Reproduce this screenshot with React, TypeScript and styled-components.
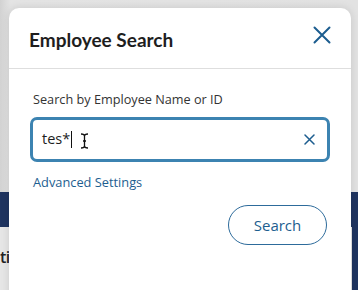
import styled, { createGlobalStyle } from "styled-components";

const GlobalStyle = createGlobalStyle`
  html, body {
    margin: 0;
    padding: 0;
  }
  body {
    font-family: "Open Sans", "Noto Sans", sans-serif;
    background: #dcdcdc;
  }
`;

const App = () => {
  return (
    <Page>
      <GlobalStyle />
      <Backdrop>
        <TopArea />
        <NavBar />
        <Lower>
          <LowerMain>
            <PageText>ti</PageText>
          </LowerMain>
          <SidePanel />
        </Lower>
      </Backdrop>

      <Modal>
        <ModalHeader>
          <Title>Employee Search</Title>
          <CloseButton aria-label="Close">
            <svg width="18" height="18" viewBox="0 0 18 18">
              <path
                d="M1.5 1.5 L16.5 16.5 M16.5 1.5 L1.5 16.5"
                stroke="currentColor"
                strokeWidth="2"
                strokeLinecap="round"
              />
            </svg>
          </CloseButton>
        </ModalHeader>
        <ModalBody>
          <Label>Search by Employee Name or ID</Label>
          <Field>
            <FieldText>tes*</FieldText>
            <Caret />
            <Pointer>
              <svg width="9" height="16" viewBox="0 0 9 16">
                <path
                  d="M1 1 Q4.5 1 4.5 3 L4.5 13 Q4.5 15 1 15 M8 1 Q4.5 1 4.5 3 M4.5 13 Q4.5 15 8 15 M3 8 L6 8"
                  stroke="#111"
                  strokeWidth="1.3"
                  fill="none"
                />
              </svg>
            </Pointer>
            <ClearButton aria-label="Clear">
              <svg width="11" height="11" viewBox="0 0 11 11">
                <path
                  d="M1 1 L10 10 M10 1 L1 10"
                  stroke="currentColor"
                  strokeWidth="1.5"
                  strokeLinecap="round"
                />
              </svg>
            </ClearButton>
          </Field>
          <AdvancedLink href="#">Advanced Settings</AdvancedLink>
          <Actions>
            <SearchButton type="button">Search</SearchButton>
          </Actions>
        </ModalBody>
      </Modal>
    </Page>
  );
};

const Page = styled.div`
  position: relative;
  width: 358px;
  height: 290px;
  overflow: hidden;
`;

const Backdrop = styled.div`
  display: flex;
  flex-direction: column;
  height: 100%;
  background: linear-gradient(90deg, #d2d2d2 0%, #e4e4e4 3%, #e2e2e2 100%);
`;

const TopArea = styled.div`
  height: 192px;
`;

const NavBar = styled.div`
  height: 35px;
  background: #1f3460;
`;

const Lower = styled.div`
  flex: 1;
  display: flex;
`;

const LowerMain = styled.div`
  flex: 1;
  padding-top: 19px;
  background: #e6e6e6;
`;

const PageText = styled.div`
  font-size: 16px;
  font-weight: 600;
  color: #222;
  letter-spacing: -0.5px;
`;

const SidePanel = styled.div`
  width: 6px;
  background: #1f3460;
`;

const Modal = styled.div`
  position: absolute;
  top: 8px;
  left: 9px;
  width: 342px;
  height: 310px;
  background: #fff;
  border-radius: 10px;
  box-shadow: 0 0 8px rgba(0, 0, 0, 0.12);
`;

const ModalHeader = styled.div`
  display: flex;
  align-items: center;
  justify-content: space-between;
  height: 60px;
  padding: 0 20px 0 20px;
  border-bottom: 1px solid #dedede;
`;

const Title = styled.h2`
  margin: 0;
  font-family: "Lato", "Open Sans", sans-serif;
  font-size: 19px;
  font-weight: 700;
  color: #1e1e1e;
  padding-top: 2px;
`;

const CloseButton = styled.button`
  display: flex;
  padding: 0;
  border: none;
  background: none;
  color: #1c5d8f;
  margin-top: -6px;
`;

const ModalBody = styled.div`
  display: flex;
  flex-direction: column;
  padding: 21px 21px 0 21px;
`;

const Label = styled.label`
  margin-left: 3px;
  font-size: 12.7px;
  line-height: 18px;
  color: #333;
`;

const Field = styled.div`
  position: relative;
  display: flex;
  align-items: center;
  box-sizing: border-box;
  height: 45px;
  margin-top: 9px;
  padding: 0 9px;
  border: 3px solid #3c83b1;
  border-radius: 7px;
`;

const FieldText = styled.span`
  font-size: 14.5px;
  color: #1e1e1e;
  padding-bottom: 2px;
`;

const Caret = styled.span`
  width: 1px;
  height: 17px;
  margin-left: 1px;
  background: #111;
`;

const Pointer = styled.span`
  display: flex;
  margin-left: 8px;
  margin-top: 2px;
`;

const ClearButton = styled.button`
  display: flex;
  margin-left: auto;
  margin-right: 3px;
  padding: 0;
  border: none;
  background: none;
  color: #1c5d8f;
`;

const AdvancedLink = styled.a`
  align-self: flex-start;
  margin-top: 11px;
  margin-left: 3px;
  font-size: 12.8px;
  font-weight: 500;
  line-height: 18px;
  color: #1d5e90;
  text-decoration: none;
`;

const Actions = styled.div`
  display: flex;
  justify-content: flex-end;
  margin-top: 14px;
  padding-right: 3px;
`;

const SearchButton = styled.button`
  width: 99px;
  height: 40px;
  border: 1px solid #2d6b9b;
  border-radius: 20px;
  background: #fff;
  font-family: "Open Sans", sans-serif;
  font-size: 15px;
  font-weight: 500;
  color: #1d5e90;
`;

export default App;
